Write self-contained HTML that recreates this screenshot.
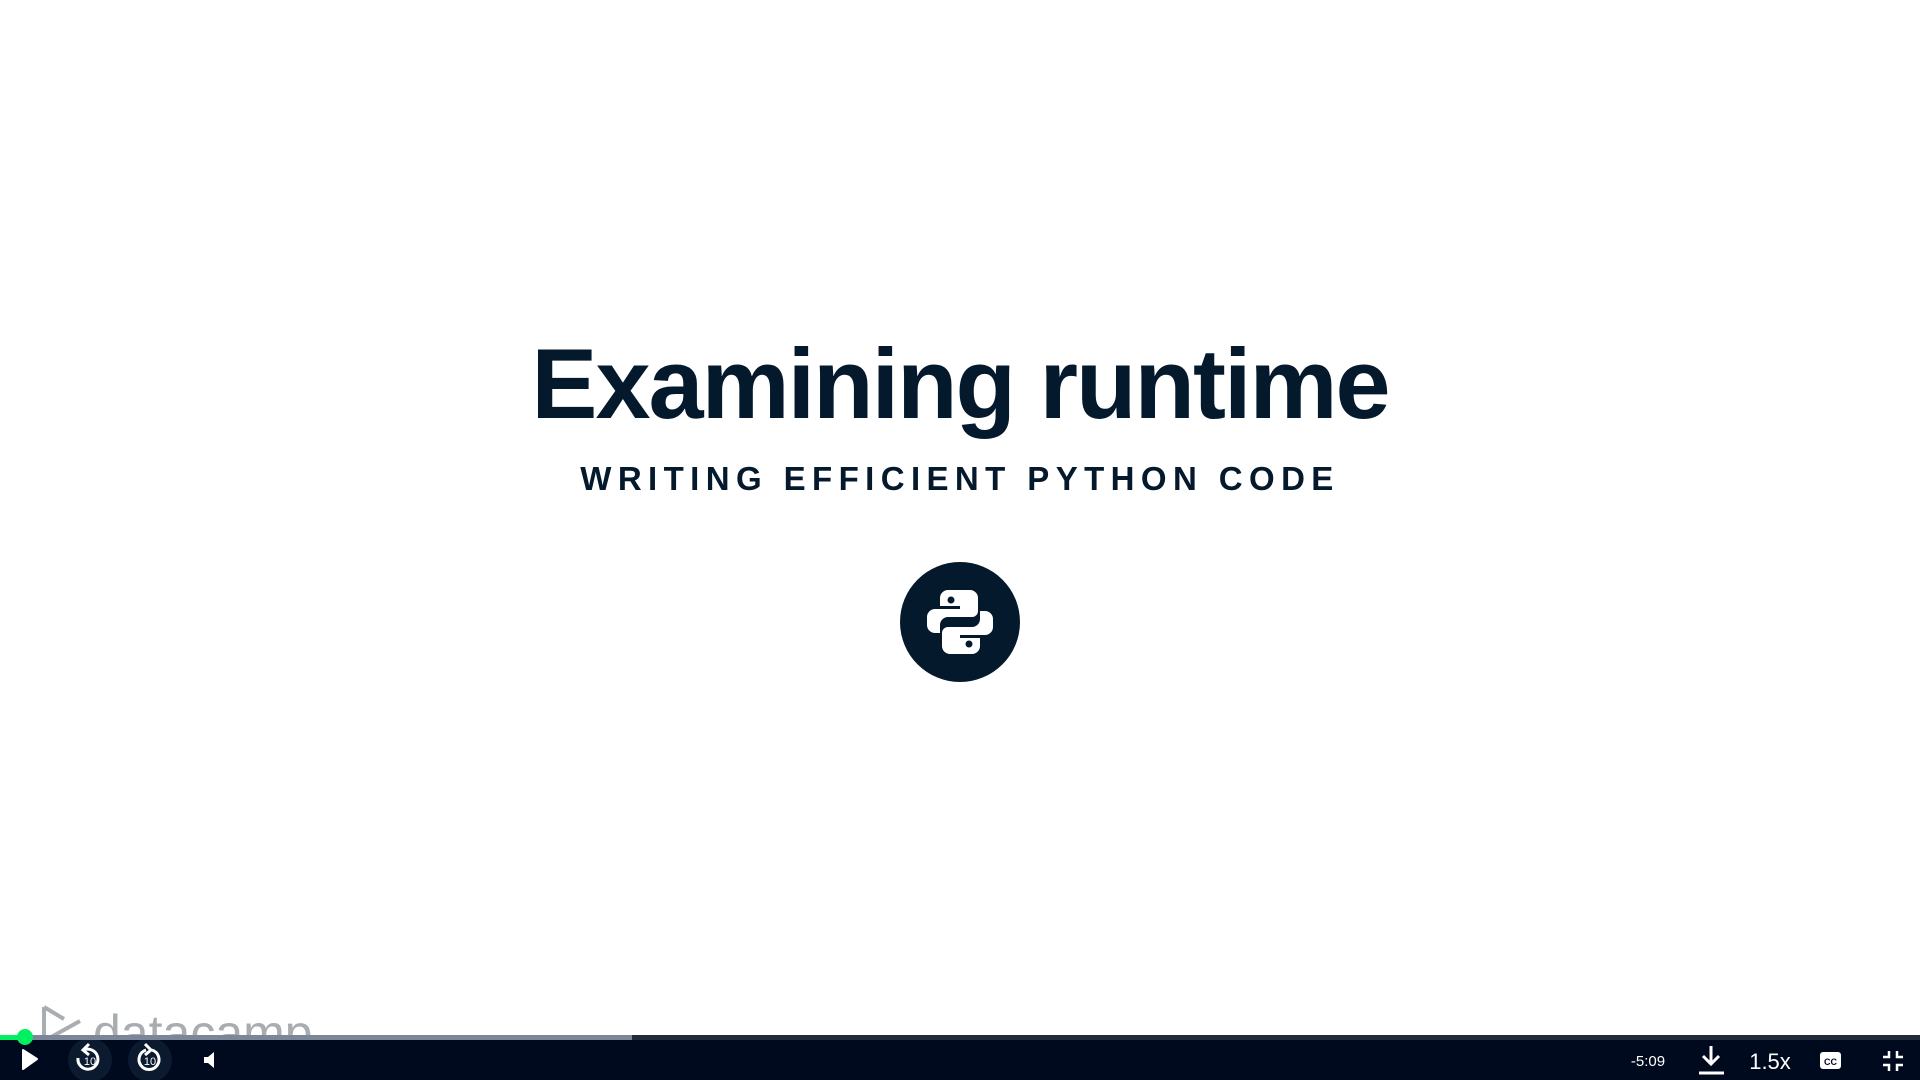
<!DOCTYPE html><html><head><style>
body{margin:0;width:1920px;height:1080px;background:#fff;position:relative;overflow:hidden;font-family:"Liberation Sans",sans-serif}
.t{position:absolute;left:0;width:1920px;text-align:center;color:#05192d}
</style></head><body>
<div class="t" style="top:327px;font-size:99px;font-weight:700;letter-spacing:-2px">Examining runtime</div>
<div class="t" style="top:460px;font-size:33px;letter-spacing:6.4px;font-weight:700">WRITING EFFICIENT PYTHON CODE</div>
<svg style="position:absolute;left:900px;top:562px" width="120" height="120" viewBox="0 0 120 120">
<circle cx="60" cy="60" r="60" fill="#05192d"/>
<path d="M60 28h-12a8 8 0 0 0-8 8v8h20v3H35a8 8 0 0 0-8 8v8a8 8 0 0 0 8 8h5v-8a8 8 0 0 1 8-8h24a6 6 0 0 0 6-6V36a8 8 0 0 0-8-8z" fill="#fff"/>
<path d="M60 92h12a8 8 0 0 0 8-8v-8H60v-3h25a8 8 0 0 0 8-8v-8a8 8 0 0 0-8-8h-5v8a8 8 0 0 1-8 8H48a6 6 0 0 0-6 6v13a8 8 0 0 0 8 8z" fill="#fff"/>
<circle cx="51" cy="38" r="3.5" fill="#05192d"/><circle cx="69" cy="82" r="3.5" fill="#05192d"/>
</svg>
<div style="position:absolute;left:93px;top:1004px;font-size:50px;color:#a8adb2;font-weight:400">datacamp</div>
<svg style="position:absolute;left:40px;top:1005px" width="45" height="40"><path d="M4 2v34M4 2l20 12M4 36l36-20" stroke="#a8adb2" stroke-width="4" fill="none"/></svg>
<div style="position:absolute;left:0;top:1035px;width:1920px;height:5px;background:#212b3b"></div>
<div style="position:absolute;left:0;top:1035px;width:632px;height:5px;background:#7b8799"></div>
<div style="position:absolute;left:0;top:1035px;width:25px;height:5px;background:#03ef62"></div>
<div style="position:absolute;left:0;top:1040px;width:1920px;height:40px;background:#000a1f"></div>
<div style="position:absolute;left:17px;top:1029px;width:16px;height:16px;border-radius:50%;background:#03ef62"></div>
<svg style="position:absolute;left:0;top:1040px" width="1920" height="40">
<path d="M23 10 L37 19 L23 29 Z" fill="#fff" stroke="#fff" stroke-width="2" stroke-linejoin="round"/>
<circle cx="90" cy="20" r="22" fill="#0b1a2e"/><circle cx="150" cy="20" r="22" fill="#0b1a2e"/>
<path d="M84 10a10 10 0 1 1-6 8" stroke="#fff" stroke-width="3" fill="none"/><path d="M89 4l-6 6 6 5" stroke="#fff" stroke-width="3" fill="none"/>
<path d="M146 10a10 10 0 1 0 6 0" stroke="#fff" stroke-width="3" fill="none"/><path d="M145 4l6 6-6 5" stroke="#fff" stroke-width="3" fill="none"/>
<text x="90" y="25" fill="#fff" font-size="11" text-anchor="middle" font-family="Liberation Sans">10</text>
<text x="150" y="25" fill="#fff" font-size="11" text-anchor="middle" font-family="Liberation Sans">10</text>
<path d="M204 17h4l6-5v16l-6-5h-4z" fill="#fff"/>
<text x="1648" y="26" fill="#fff" font-size="15" text-anchor="middle" font-family="Liberation Sans">-5:09</text>
<path d="M1711 6v18M1703 16l8 8 8-8M1699 33h25" stroke="#fff" stroke-width="3" fill="none"/>
<text x="1770" y="29" fill="#fff" font-size="22" text-anchor="middle" font-family="Liberation Sans">1.5x</text>
<rect x="1820" y="12" width="21" height="17" rx="3" fill="#fff"/>
<text x="1830.5" y="25" fill="#000a1f" font-size="9" font-weight="700" text-anchor="middle" font-family="Liberation Sans">CC</text>
<path d="M1889 11v6h-6M1897 11v6h6M1889 31v-6h-6M1897 31v-6h6" stroke="#fff" stroke-width="2.5" fill="none"/>
</svg>
</body></html>
